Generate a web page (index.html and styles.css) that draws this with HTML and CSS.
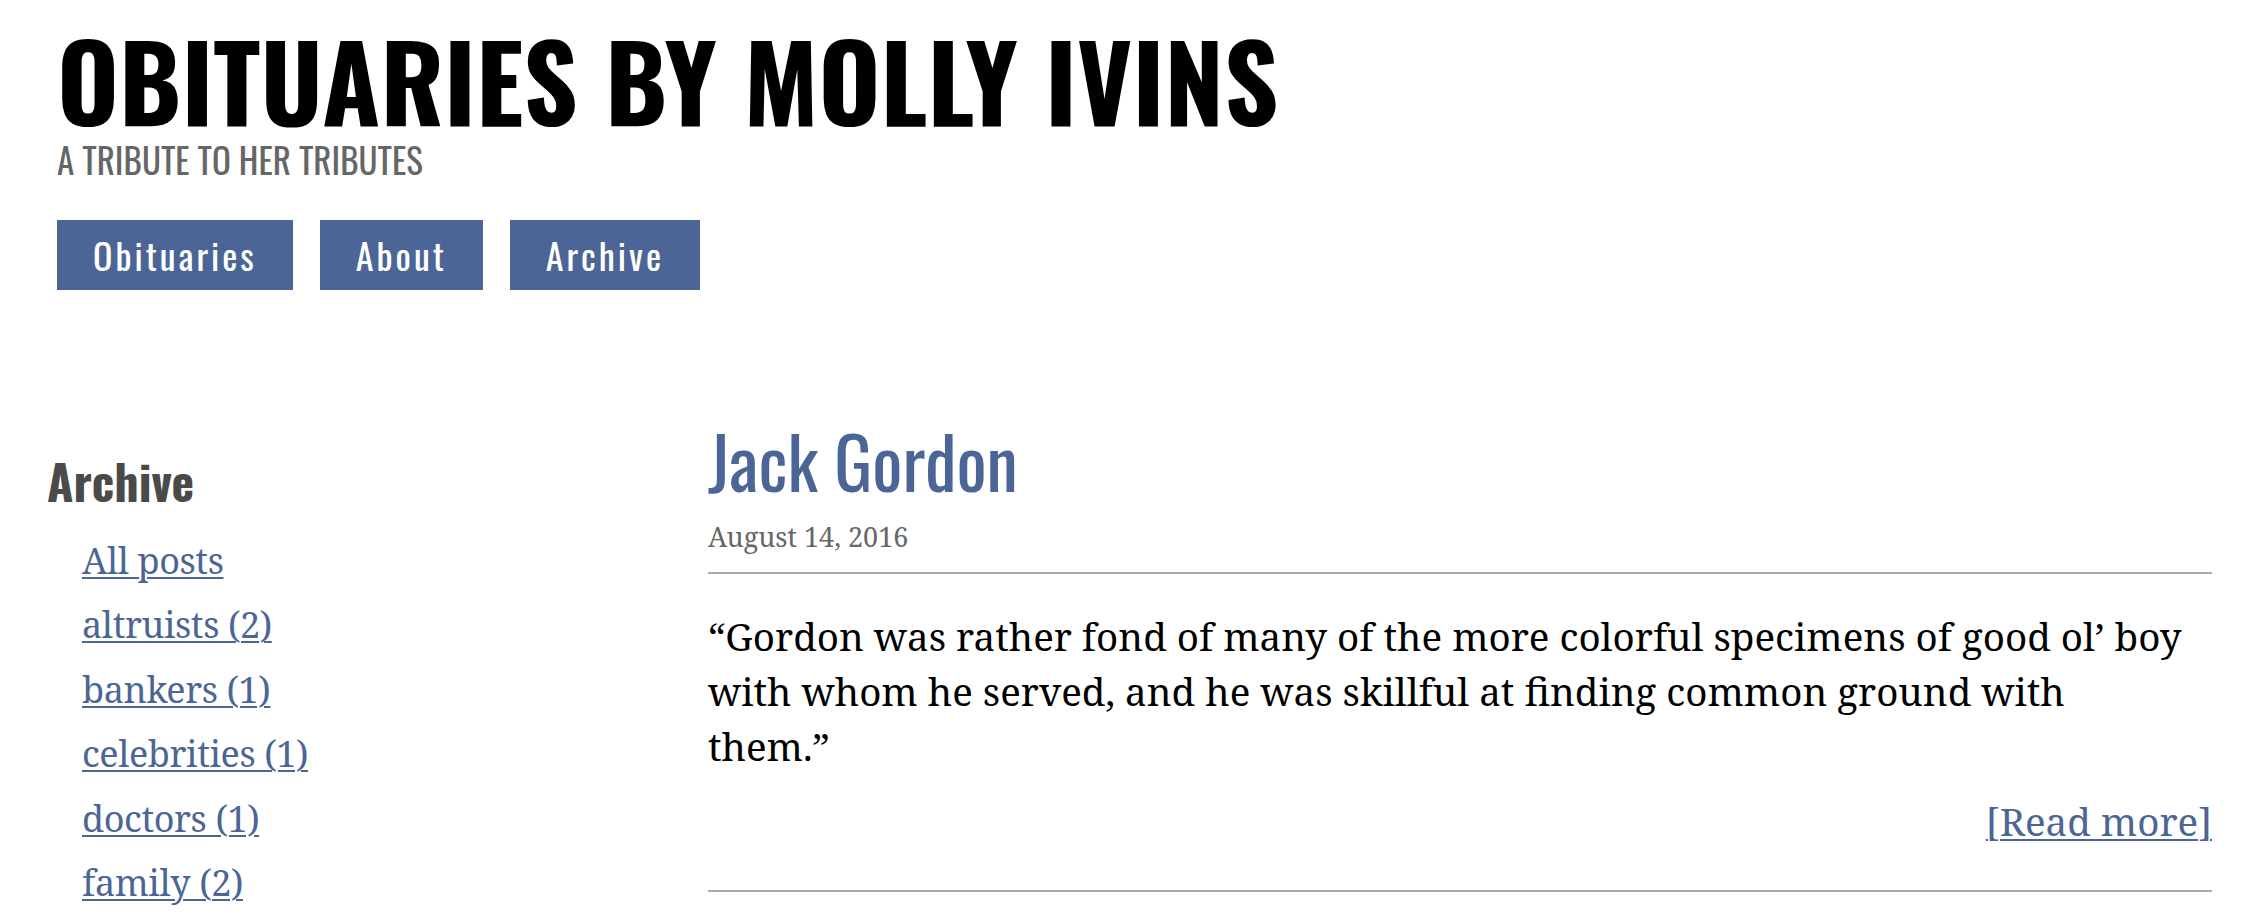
FILE: index.html
```html
<!DOCTYPE html>
<html lang="en">
<head>
<meta charset="utf-8">
<title>Obituaries by Molly Ivins</title>
<link rel="stylesheet" href="styles.css">
</head>
<body>
<header class="site-header">
  <h1 class="site-title">OBITUARIES BY MOLLY IVINS</h1>
  <p class="site-tagline">A TRIBUTE TO HER TRIBUTES</p>
  <nav class="site-nav">
    <a class="nav-btn" href="#">Obituaries</a>
    <a class="nav-btn" href="#">About</a>
    <a class="nav-btn" href="#">Archive</a>
  </nav>
</header>
<div class="layout">
  <aside class="sidebar">
    <h3 class="sidebar-title">Archive</h3>
    <ul class="archive-list">
      <li><a href="#">All posts</a></li>
      <li><a href="#">altruists (2)</a></li>
      <li><a href="#">bankers (1)</a></li>
      <li><a href="#">celebrities (1)</a></li>
      <li><a href="#">doctors (1)</a></li>
      <li><a href="#">family (2)</a></li>
    </ul>
  </aside>
  <main class="posts">
    <article class="post">
      <div class="post-head">
        <h2 class="post-title"><a href="#">Jack Gordon</a></h2>
        <div class="post-date">August 14, 2016</div>
      </div>
      <p class="post-excerpt">“Gordon was rather fond of many of the more colorful specimens of good ol’ boy with whom he served, and he was skillful at finding common ground with<br>them.”</p>
      <div class="post-more"><a href="#">[Read more]</a></div>
    </article>
  </main>
</div>
</body>
</html>
```

FILE: styles.css
```css
html, body {
  margin: 0;
  padding: 0;
  background: #ffffff;
}

body {
  font-family: "Noto Serif", "DejaVu Serif", serif;
  color: #000000;
}

a {
  color: #4b6696;
}

.site-header {
  padding: 26px 0 0 57px;
}

.site-title {
  margin: 0;
  font-family: "Oswald", "Roboto Condensed", sans-serif;
  font-weight: 700;
  font-size: 106px;
  line-height: 106px;
  color: #000000;
}

.site-tagline {
  margin: 9px 0 0 0;
  font-family: "Oswald", "Roboto Condensed", sans-serif;
  font-weight: 400;
  font-size: 35px;
  line-height: 36px;
  color: #666666;
}

.site-nav {
  display: flex;
  gap: 27px;
  margin-top: 43px;
}

.nav-btn {
  display: block;
  height: 70px;
  padding: 0 36px 0 36px;
  background: #4b6696;
  color: #ffffff;
  text-decoration: none;
  font-family: "Oswald", "Roboto Condensed", sans-serif;
  font-weight: 400;
  font-size: 36px;
  line-height: 70px;
  letter-spacing: 3px;
}

.layout {
  display: grid;
  grid-template-columns: 661px 1504px;
  padding-left: 47px;
  margin-top: 133px;
}

.sidebar-title {
  margin: 34px 0 0 0;
  font-family: "Oswald", "Roboto Condensed", sans-serif;
  font-weight: 700;
  font-size: 48px;
  line-height: 48px;
  color: #4a4a4a;
}

.archive-list {
  list-style: none;
  margin: 24px 0 0 0;
  padding: 0 0 0 35px;
}

.archive-list li {
  font-size: 36px;
  line-height: 64.4px;
  letter-spacing: -0.4px;
}

.archive-list a,
.post-more a {
  text-decoration-thickness: 2px;
  text-underline-offset: 3px;
}

.post-head {
  border-bottom: 2px solid #aaaaaa;
  padding-bottom: 21px;
}

.post-title {
  margin: 0;
  font-family: "Oswald", "Roboto Condensed", sans-serif;
  font-weight: 400;
  font-size: 71px;
  line-height: 74px;
}

.post-title a {
  text-decoration: none;
}

.post-date {
  margin-top: 26px;
  font-size: 27px;
  line-height: 28px;
  color: #666666;
}

.post-excerpt {
  margin: 35px 0 0 0;
  font-size: 38.5px;
  line-height: 55px;
}

.post-more {
  margin-top: 20px;
  text-align: right;
  font-size: 38.5px;
  line-height: 55px;
}

.post {
  border-bottom: 2px solid #aaaaaa;
  padding-bottom: 41px;
}
```
